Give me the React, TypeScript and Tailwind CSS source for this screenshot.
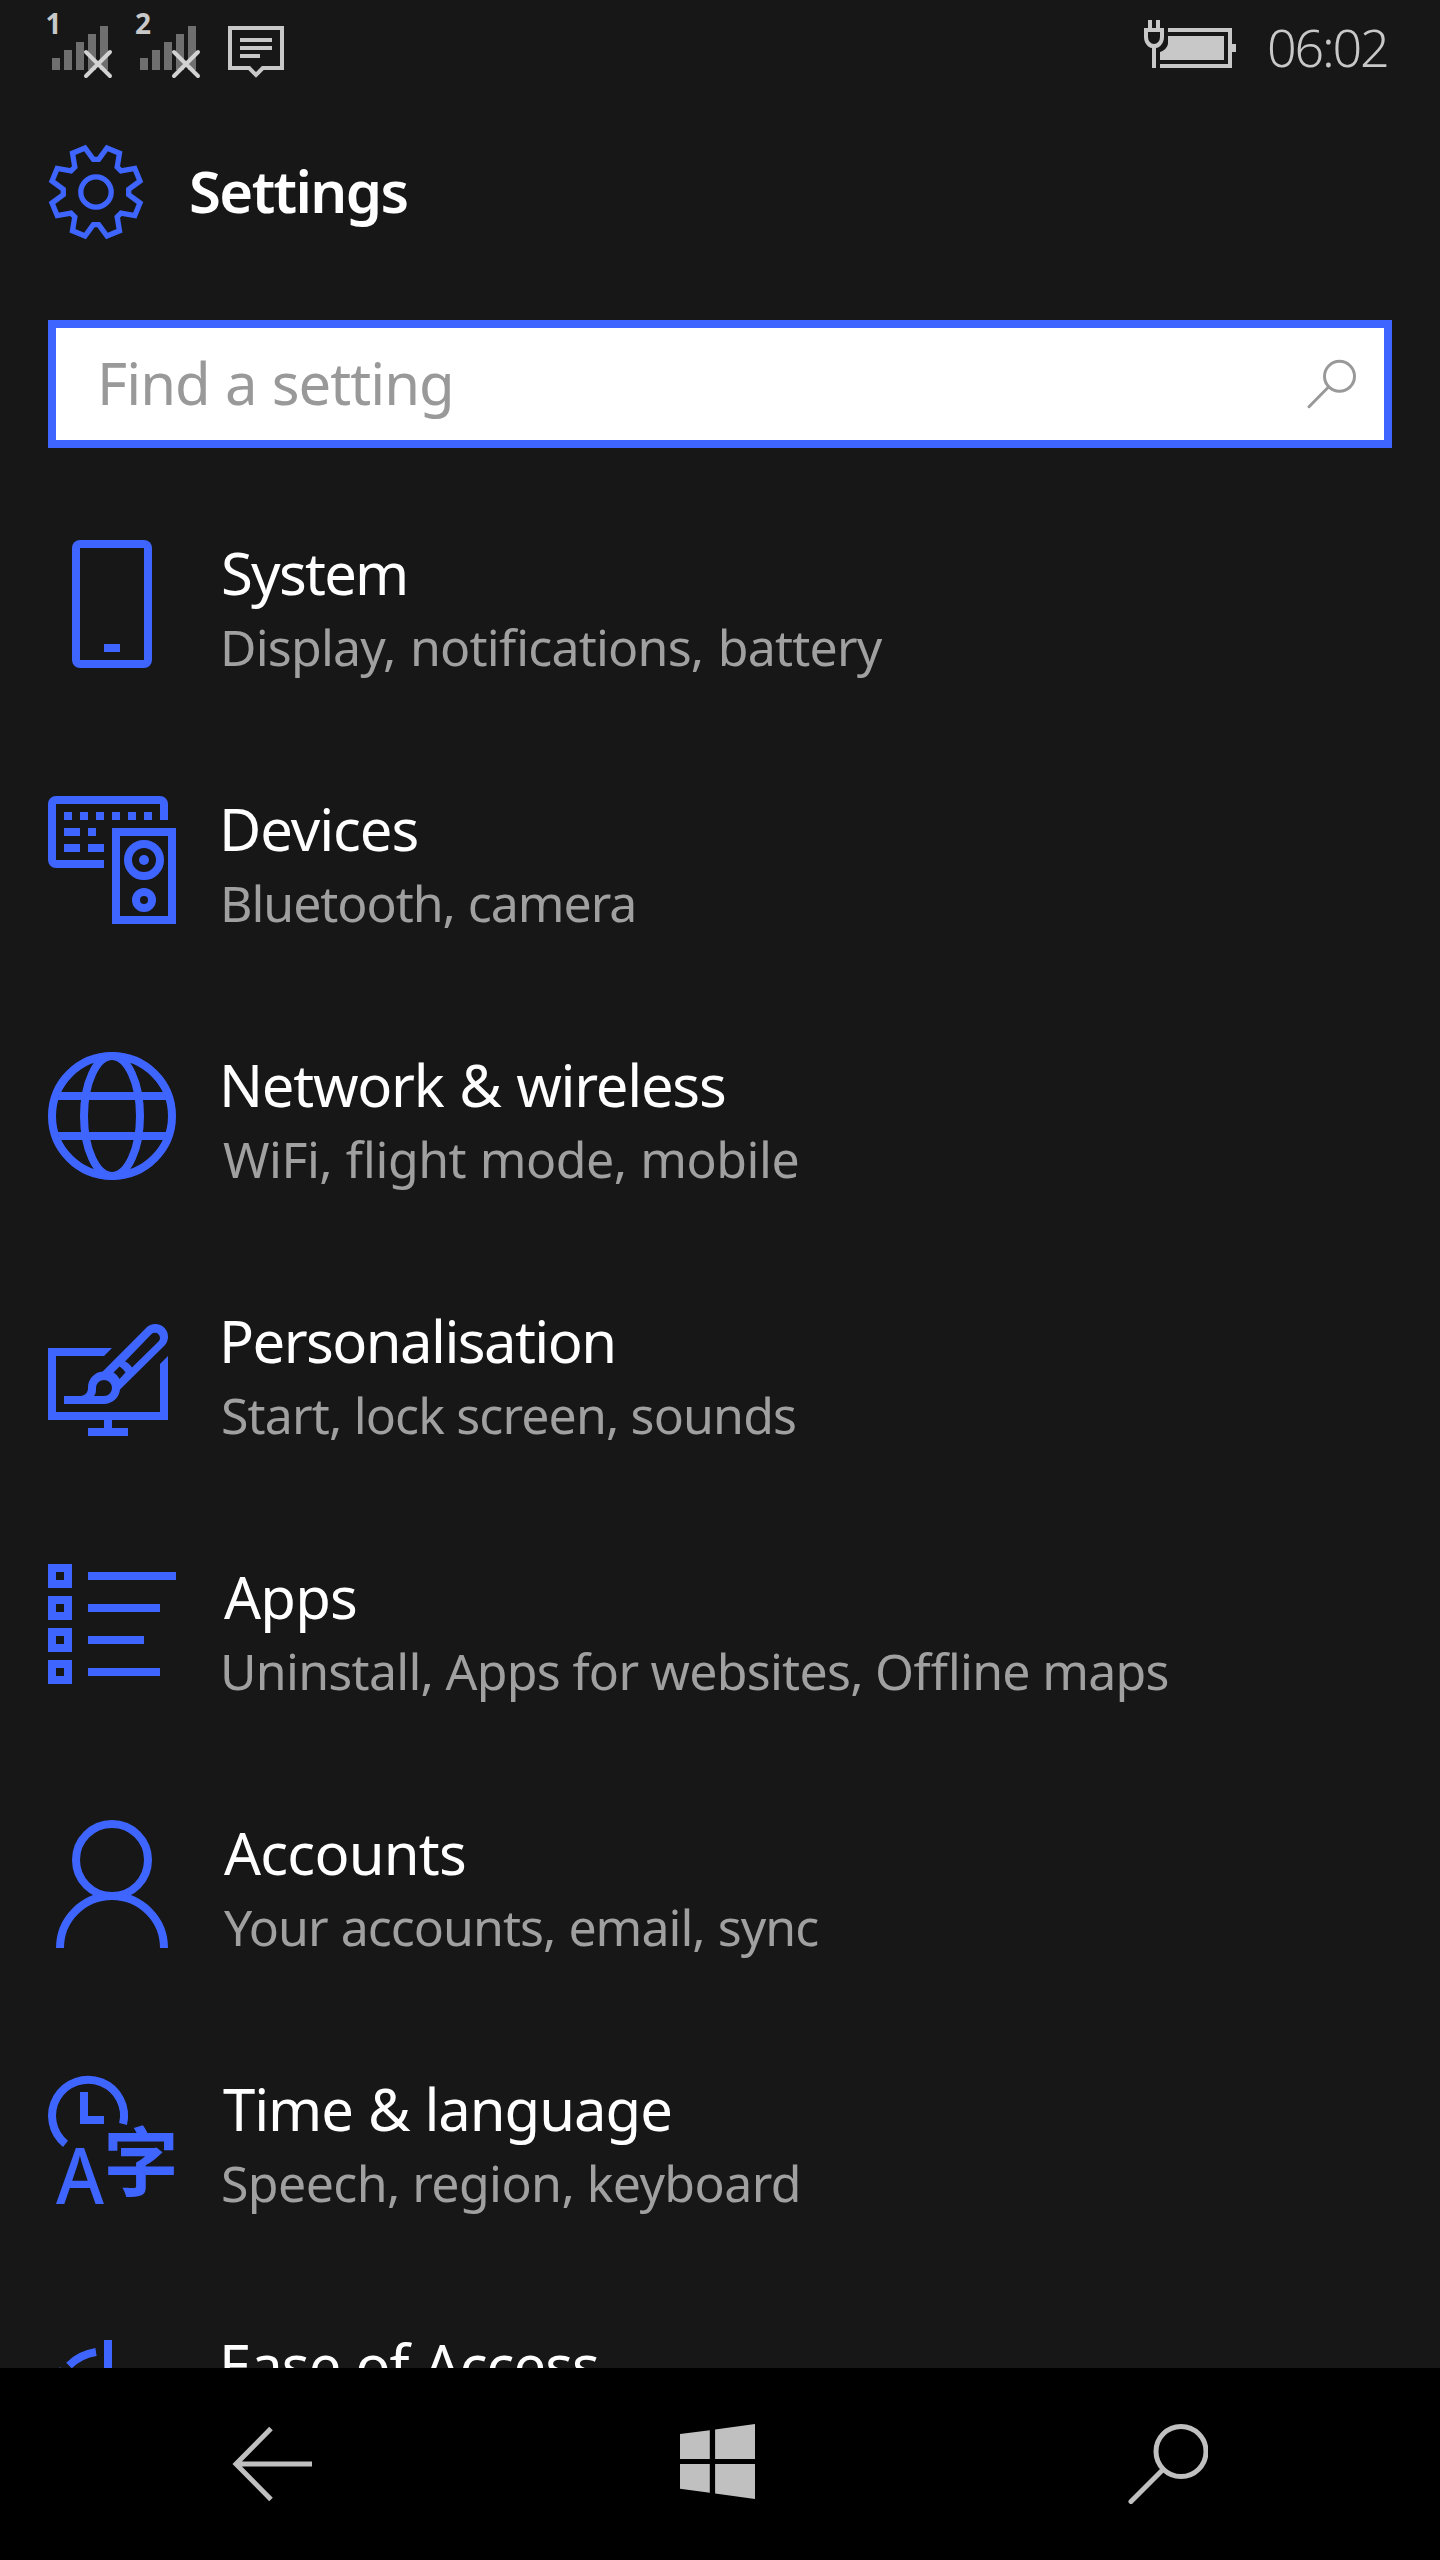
/**
 * Phone settings screen: status bar, search box, category list and nav bar
 */

import React from 'react';

interface SettingsItem {
  id: string;
  title: string;
  titleClass: string;
  detail: string;
  detailClass: string;
  icon: React.ReactNode;
}

/* ---------- Category icons (128 x 128 grid) ---------- */

const CategoryIcon: React.FC<{ children: React.ReactNode }> = ({ children }) => (
  <svg
    viewBox="0 0 128 128"
    fill="none"
    stroke="currentColor"
    strokeWidth="8"
    className="w-32 h-32 shrink-0 overflow-visible"
  >
    {children}
  </svg>
);

const SystemIcon = () => (
  <CategoryIcon>
    <rect x="24" y="0" width="80" height="128" rx="8" fill="currentColor" stroke="none" />
    <rect x="32" y="8" width="64" height="112" fill="#171717" stroke="none" />
    <rect x="56" y="104" width="16" height="8" fill="currentColor" stroke="none" />
  </CategoryIcon>
);

const DevicesIcon = () => (
  <CategoryIcon>
    <path
      d="M8 0H112A8 8 0 0 1 120 8V24H112V8H8V64H56V72H8A8 8 0 0 1 0 64V8A8 8 0 0 1 8 0Z"
      fill="currentColor"
      stroke="none"
    />
    <path d="M16 20H104" strokeDasharray="8 8" />
    <path d="M16 36H32M40 36H48M16 52H32M40 52H56" />
    <rect x="68" y="36" width="56" height="88" />
    <circle cx="96" cy="64" r="16" />
    <circle cx="96" cy="64" r="5" fill="currentColor" stroke="none" />
    <circle cx="96" cy="104" r="8" />
  </CategoryIcon>
);

const NetworkIcon = () => (
  <CategoryIcon>
    <circle cx="64" cy="64" r="60" />
    <ellipse cx="64" cy="64" rx="28" ry="60" />
    <path d="M9 44H119M9 84H119" />
  </CategoryIcon>
);

const PersonalisationIcon = () => (
  <CategoryIcon>
    <g fill="currentColor" stroke="none">
      <path d="M0 40H64L56 48H8V104H112V56L120 48V112H64V120H80V128H40V120H56V112H0Z" />
      <path
        fillRule="evenodd"
        d="M16 88H33C38 87 40 84 40 80A16 16 0 0 1 54.7 63.5L98.3 19.7A12.7 12.7 0 0 1 116.3 37.7L72 81.5A16 16 0 0 1 56 96H16ZM46 88C48 86 48 83 48 80A8 8 0 1 1 56 88ZM77 53.5L103.3 26.3A4.6 4.6 0 0 1 110.5 33.5L84 59.5C82.5 57 80 54.5 77 53.5ZM71.5 58.5L65.5 64.5C68 66 70 68 71.5 71L77.5 64.5C76 62 74 60 71.5 58.5Z"
      />
    </g>
  </CategoryIcon>
);

const AppsIcon = () => (
  <CategoryIcon>
    {[0, 32, 64, 96].map((y) => (
      <rect key={y} x="4" y={y + 4} width="16" height="16" />
    ))}
    <path d="M40 12H128M40 44H112M40 76H96M40 108H112" />
  </CategoryIcon>
);

const AccountsIcon = () => (
  <CategoryIcon>
    <circle cx="64" cy="40" r="36" />
    <path d="M12 128A52 52 0 0 1 116 128" />
  </CategoryIcon>
);

const TimeIcon = () => (
  <CategoryIcon>
    <path d="M17.5 67.8A36 36 0 1 1 75.1 48" />
    <path d="M36 16V44H56" />
    <g fill="currentColor" stroke="none">
      <text x="8" y="128" fontSize="78" fontWeight="500" textLength="48" lengthAdjust="spacingAndGlyphs" className="font-['Noto_Sans',sans-serif]">A</text>
      <text x="55.500" y="114" fontSize="75" fontWeight="700" className="font-['Noto_Sans_CJK_SC',sans-serif]">字</text>
    </g>
  </CategoryIcon>
);

const EaseOfAccessIcon = () => (
  <CategoryIcon>
    <path d="M60 8V64" />
    <path d="M48 20A49 49 0 0 0 21 33.5" />
    <path d="M15 37.5A49 49 0 0 0 7 60" />
  </CategoryIcon>
);

/* ---------- Status bar icons ---------- */

const SignalIcon: React.FC<{ slot: string; offset: number }> = ({ slot, offset }) => (
  <svg viewBox="0 0 88 96" className="w-[88px] h-24 shrink-0 overflow-visible">
    <text x={offset} y="34" fontSize="28" fontWeight="700" fill="#c8c8c8" className="font-['Noto_Sans',sans-serif]">
      {slot}
    </text>
    <path d="M4 58h8v12h-8zM16 50h8v20h-8zM28 42h8v28h-8zM40 34h8v36h-8zM52 26h8v44h-8z" fill="#6f6f6f" />
    <path d="M38 52L62 76M62 52L38 76" stroke="#d2d2d2" strokeWidth="4" strokeLinecap="round" />
  </svg>
);

const MessageIcon = () => (
  <svg viewBox="0 0 64 96" fill="none" stroke="#c8c8c8" strokeWidth="4" className="w-16 h-24 shrink-0">
    <path d="M6 28H58V68H38.8L32 75L25.2 68H6Z" />
    <path d="M16 40H48M16 48H48M16 56H36" />
  </svg>
);

const BatteryIcon = () => (
  <svg viewBox="0 0 123 96" className="w-[123px] h-24 shrink-0">
    <g fill="#c8c8c8">
      <path d="M4 20h4v8h4v-8h4v8h4v9c0 6-4 10.500-8 11v20h-4v-20c-4-.5-8-5-8-11v-9h4z" />
      <path d="M24 28H88V44H92V52H88V68H16V64H84V32H24Z" />
      <path d="M24 36H80V60H16V52C20 51 24 47 24 43Z" />
    </g>
    <path d="M4 32H16V37A6 7 0 0 1 4 37Z" fill="#171717" />
  </svg>
);

const GearIcon = () => (
  <svg viewBox="-48 -48 96 96" fill="none" stroke="currentColor" strokeWidth="5.3" className="w-24 h-24 shrink-0">
    {/* eight teeth, one pair of edges per 45 degrees */}
    <path d="M-2.700 -32.700H2.700L11 -44L23.500 -38.800L21.200 -25L25 -21.200L38.800 -23.500L44 -11L32.700 -2.700V2.700L44 11L38.800 23.500L25 21.200L21.200 25L23.500 38.800L11 44L2.700 32.700H-2.700L-11 44L-23.500 38.800L-21.200 25L-25 21.200L-38.800 23.500L-44 11L-32.700 2.700V-2.700L-44 -11L-38.800 -23.500L-25 -21.200L-21.200 -25L-23.500 -38.800L-11 -44Z" />
    <circle r="15.2" />
  </svg>
);

const SETTINGS_ITEMS: SettingsItem[] = [
  {
    id: 'system',
    title: 'System',
    titleClass: 'ml-[2px] tracking-[-1.75px]',
    detail: 'Display, notifications, battery',
    detailClass: 'ml-px tracking-[-0.78px] [word-spacing:2px]',
    icon: <SystemIcon />,
  },
  {
    id: 'devices',
    title: 'Devices',
    titleClass: 'tracking-[-1.06px]',
    detail: 'Bluetooth, camera',
    detailClass: 'ml-px tracking-[-1.05px] [word-spacing:1px]',
    icon: <DevicesIcon />,
  },
  {
    id: 'network',
    title: 'Network & wireless',
    titleClass: 'tracking-[-1.27px] [word-spacing:2px]',
    detail: 'WiFi, flight mode, mobile',
    detailClass: 'ml-[4px] tracking-[-0.47px] [word-spacing:1px]',
    icon: <NetworkIcon />,
  },
  {
    id: 'personalisation',
    title: 'Personalisation',
    titleClass: 'tracking-[-1.57px]',
    detail: 'Start, lock screen, sounds',
    detailClass: 'ml-[2px] tracking-[-0.86px]',
    icon: <PersonalisationIcon />,
  },
  {
    id: 'apps',
    title: 'Apps',
    titleClass: 'ml-[5px] tracking-[-0.8px]',
    detail: 'Uninstall, Apps for websites, Offline maps',
    detailClass: 'ml-px tracking-[-0.72px]',
    icon: <AppsIcon />,
  },
  {
    id: 'accounts',
    title: 'Accounts',
    titleClass: 'ml-[5px] tracking-[-0.78px]',
    detail: 'Your accounts, email, sync',
    detailClass: 'ml-[5px] tracking-[-0.98px] [word-spacing:1px]',
    icon: <AccountsIcon />,
  },
  {
    id: 'time',
    title: 'Time & language',
    titleClass: 'ml-[4px] tracking-[-1.05px] [word-spacing:1px]',
    detail: 'Speech, region, keyboard',
    detailClass: 'ml-[2px] tracking-[-0.58px]',
    icon: <TimeIcon />,
  },
  {
    id: 'ease',
    title: 'Ease of Access',
    titleClass: 'tracking-[-0.98px] [word-spacing:1px]',
    detail: '',
    detailClass: '',
    icon: <EaseOfAccessIcon />,
  },
];

const StatusBar = () => (
  <div className="h-24 px-12 flex justify-between shrink-0">
    <div className="flex">
      <SignalIcon slot="1" offset={-2.5} />
      <SignalIcon slot="2" offset={-1} />
      <MessageIcon />
    </div>
    <div className="flex w-[248px]">
      <BatteryIcon />
      <span className="text-[52px] leading-[93px] font-[350] tracking-[-2.2px] text-[#c8c8c8]">06:02</span>
    </div>
  </div>
);

const SearchBox = () => (
  <div className="mx-12 h-32 border-8 border-[#3e65ff] bg-white pl-[41px] pr-7 flex items-center justify-between shrink-0">
    <span className="text-[58px] leading-[72px] pb-[2px] tracking-[-0.95px] [word-spacing:1px] text-[#999999]">Find a setting</span>
    <svg viewBox="0 0 50 50" fill="none" stroke="#999999" strokeWidth="3" strokeLinecap="round" className="w-[50px] h-[50px]">
      <circle cx="33.500" cy="17.300" r="15" />
      <path d="M22.500 28L3 47.700" />
    </svg>
  </div>
);

const SettingsRow: React.FC<{ item: SettingsItem }> = ({ item }) => (
  <div className="h-64 px-12 flex gap-[43px] shrink-0">
    <div className="pt-7 text-[#3e65ff]">{item.icon}</div>
    <div className="pt-[25px] whitespace-nowrap [font-feature-settings:'liga'_1]">
      <div className={`text-[58px] leading-[71px] text-white ${item.titleClass}`}>{item.title}</div>
      <div className={`mt-[7px] text-[50px] leading-[64px] text-[#a0a0a0] ${item.detailClass}`}>{item.detail}</div>
    </div>
  </div>
);

const NavBar = () => (
  <div className="h-48 bg-black px-[232px] flex items-center justify-between shrink-0">
    <svg viewBox="232 2424 80 80" fill="none" stroke="#c0c0c0" strokeWidth="5" className="w-20 h-20">
      <path d="M312 2464H236M271 2428.500L236 2464L271 2499.500" />
    </svg>
    <svg viewBox="680 2424 80 80" fill="#c0c0c0" className="w-20 h-20">
      <path d="M680 2434L709.800 2430.200V2459H680ZM715.100 2429.500L755 2424V2459H715.100ZM680 2464H709.800V2492.700L680 2488.700ZM715.100 2464H755V2499L715.100 2493.500Z" />
    </svg>
    <svg viewBox="1128 2424 80 80" fill="none" stroke="#c0c0c0" strokeWidth="5" strokeLinecap="round" className="w-20 h-20">
      <circle cx="1181" cy="2451.500" r="25" />
      <path d="M1163 2469.500L1131 2501.500" />
    </svg>
  </div>
);

export default function App() {
  return (
    <div className="w-[1440px] h-[2560px] flex flex-col overflow-hidden bg-[#171717] font-['Noto_Sans','Open_Sans',sans-serif]">
      <StatusBar />

      {/* Page header */}
      <div className="h-48 mb-8 px-12 flex items-center gap-[45px] shrink-0 text-[#3e65ff]">
        <GearIcon />
        <h1 className="text-[58px] leading-[72px] pb-[2px] font-semibold tracking-[-1.6px] text-white">Settings</h1>
      </div>

      <SearchBox />

      {/* Categories, the last one runs under the nav bar */}
      <div className="mt-16 flex-1 min-h-0 overflow-hidden flex flex-col">
        {SETTINGS_ITEMS.map((item) => (
          <SettingsRow key={item.id} item={item} />
        ))}
      </div>

      <NavBar />
    </div>
  );
}
